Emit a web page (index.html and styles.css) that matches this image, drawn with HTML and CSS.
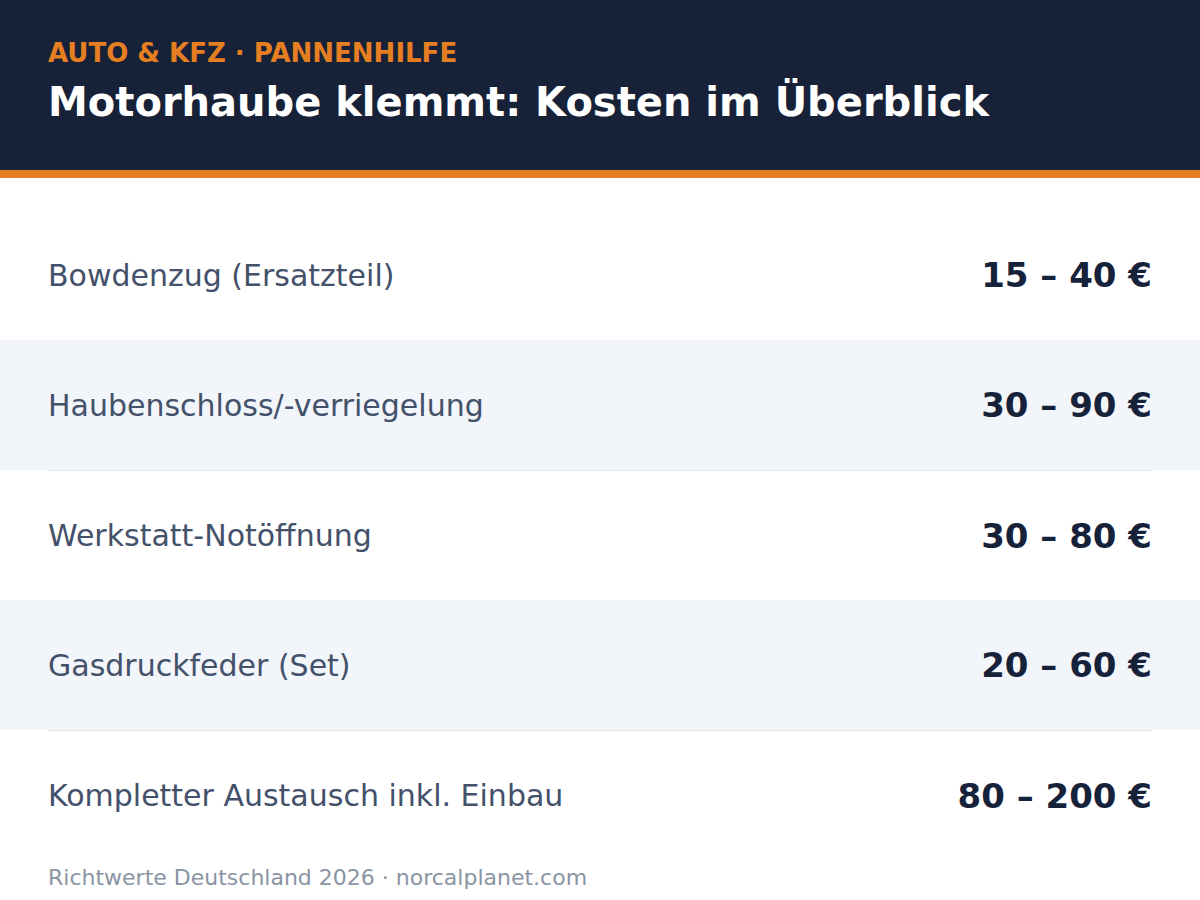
FILE: index.html
```html
<!DOCTYPE html>
<html lang="de">
<head>
<meta charset="utf-8">
<title>Motorhaube klemmt: Kosten im Überblick</title>
<link rel="stylesheet" href="styles.css">
</head>
<body>
<header class="hero">
  <div class="kicker">AUTO &amp; KFZ · PANNENHILFE</div>
  <h1 class="title">Motorhaube klemmt: Kosten im Überblick</h1>
</header>
<main class="list">
  <div class="row"><span class="label">Bowdenzug (Ersatzteil)</span><span class="price">15 – 40 €</span></div>
  <div class="row alt"><span class="label">Haubenschloss/-verriegelung</span><span class="price">30 – 90 €</span></div>
  <div class="sep"></div>
  <div class="row"><span class="label">Werkstatt-Notöffnung</span><span class="price">30 – 80 €</span></div>
  <div class="row alt"><span class="label">Gasdruckfeder (Set)</span><span class="price">20 – 60 €</span></div>
  <div class="sep"></div>
  <div class="row"><span class="label">Kompletter Austausch inkl. Einbau</span><span class="price">80 – 200 €</span></div>
</main>
<footer class="foot">Richtwerte Deutschland 2026 · norcalplanet.com</footer>
</body>
</html>
```
FILE: styles.css
```css
* { box-sizing: border-box; }
html, body { margin: 0; padding: 0; }
body {
  width: 1200px;
  height: 900px;
  overflow: hidden;
  background: #ffffff;
  font-family: "DejaVu Sans", "Liberation Sans", sans-serif;
}
.hero {
  background: #172238;
  border-bottom: 8px solid #e67e22;
  height: 178px;
  padding: 38px 48px 0;
}
.kicker {
  color: #e67e22;
  font-weight: bold;
  font-size: 26px;
  line-height: 30px;
}
.title {
  margin: 10px 0 0;
  color: #ffffff;
  font-weight: bold;
  font-size: 40px;
  line-height: 48px;
}
.list {
  padding-top: 32px;
}
.row {
  height: 130px;
  padding: 0 48px;
  display: flex;
  align-items: center;
  justify-content: space-between;
}
.sep + .row { height: 129px; }
.row.alt { background: #f2f5f9; }
.sep {
  height: 1px;
  margin: 0 48px;
  background: #e2e6ec;
}
.label {
  color: #44516a;
  font-size: 30px;
}
.price {
  color: #16213a;
  font-weight: bold;
  font-size: 34px;
}
.foot {
  padding: 5px 48px 0;
  color: #8a94a3;
  font-size: 22px;
  line-height: 26px;
}
```
